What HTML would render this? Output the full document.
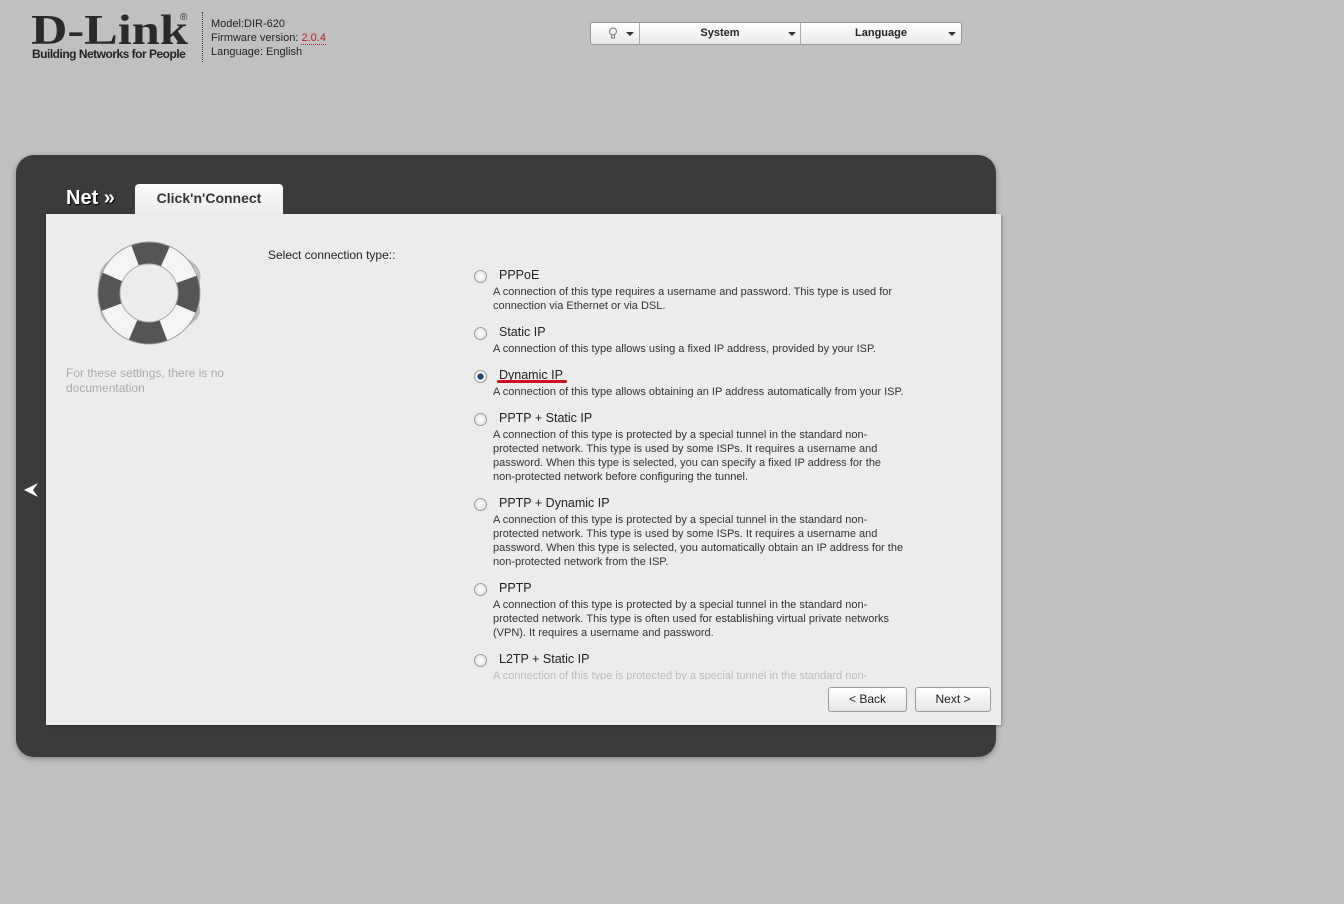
<!DOCTYPE html>
<html><head><style>
body{margin:0;width:1344px;height:904px;background:#c0c0c0;font-family:"Liberation Sans",sans-serif;position:relative;overflow:hidden}
.a{position:absolute}
.logo{left:31px;top:11px;font-family:"Liberation Serif",serif;font-weight:bold;font-size:42px;color:#2a2a2a;line-height:40px;transform:scaleX(1.2);transform-origin:left}
.tag{left:32px;top:47px;font-size:12px;font-weight:bold;color:#222;letter-spacing:-0.5px}
.info{left:211px;top:17px;font-size:11px;line-height:14px;color:#222}
.sep{left:202px;top:12px;height:50px;border-left:1px dotted #333}
.bar{left:590px;top:22px;width:370px;height:21px;background:linear-gradient(#fff,#e8e8e8);border:1px solid #999;border-radius:3px;font-size:11px;font-weight:bold;color:#222}
.bar div{position:absolute;top:0;height:21px;line-height:21px;text-align:center;border-right:1px solid #aaa}
.tri{position:absolute;top:9px;width:0;height:0;border-left:4px solid transparent;border-right:4px solid transparent;border-top:4px solid #333}
.panel{left:16px;top:155px;width:980px;height:602px;background:#3b3b3b;border-radius:18px;box-shadow:0 2px 6px rgba(0,0,0,.3)}
.content{left:46px;top:214px;width:955px;height:511px;background:#ececec;box-shadow:1px 1px 3px rgba(0,0,0,.3)}
.tab{left:135px;top:184px;width:148px;height:31px;background:linear-gradient(#fafafa,#ececec);border-radius:4px 4px 0 0;font-size:14px;font-weight:bold;color:#333;text-align:center;line-height:28px}
.net{left:66px;top:187px;font-size:20px;font-weight:bold;color:#fff;text-shadow:1px 1px 1px #000}
.r{position:absolute;left:474px;width:11px;height:11px;border-radius:50%;border:1px solid #999;background:radial-gradient(#fff,#ddd)}
.l{position:absolute;left:499px;top:0;font-size:12.5px;color:#222}
.d{position:absolute;left:493px;font-size:11px;line-height:14px;color:#333;white-space:nowrap}
.btn{top:687px;height:23px;border:1px solid #999;border-radius:3px;background:linear-gradient(#fff,#e6e6e6);font-size:12px;line-height:23px;text-align:center;color:#222}
</style></head><body>
<div class="a logo">D-Link</div>
<div class="a" style="left:180px;top:12px;font-size:10px;color:#333">®</div>
<div class="a tag">Building Networks for People</div>
<div class="a sep"></div>
<div class="a info">Model:DIR-620<br>Firmware version: <span style="color:#b22;border-bottom:1px dotted #b22">2.0.4</span><br>Language: English</div>
<div class="a bar">
<div style="left:0;width:48px"><svg width="10" height="13" style="position:absolute;left:17px;top:4px" viewBox="0 0 10 13"><circle cx="5" cy="4.5" r="3.5" fill="none" stroke="#777"/><path d="M3.5 8v3h3V8" fill="none" stroke="#777"/></svg><span class="tri" style="left:35px"></span></div>
<div style="left:49px;width:160px">System<span class="tri" style="left:148px"></span></div>
<div style="left:210px;width:160px;border:none">Language<span class="tri" style="left:147px"></span></div>
</div>
<div class="a panel"></div>
<div class="a content"></div>
<div class="a tab">Click'n'Connect</div>
<div class="a net">Net »</div>
<svg class="a" style="left:22px;top:481px" width="18" height="18" viewBox="0 0 18 18"><path d="M2 9 L16 2 L11 9 L16 16 Z" fill="#fff"/></svg>
<svg class="a" style="left:92px;top:240px" width="115" height="108" viewBox="0 0 115 108">
<path d="M20 20 Q5 30 10 45 M95 20 Q112 30 105 45 M20 85 Q5 75 12 62 M95 85 Q112 75 104 62" stroke="#bbb" stroke-width="3" fill="none"/>
<circle cx="57" cy="53" r="40" fill="none" stroke="#f4f4f4" stroke-width="22"/>
<circle cx="57" cy="53" r="40" fill="none" stroke="#555" stroke-width="22" stroke-dasharray="31 32" stroke-dashoffset="15"/>
<circle cx="57" cy="53" r="51" fill="none" stroke="#999" stroke-width="1"/>
<circle cx="57" cy="53" r="29" fill="none" stroke="#aaa" stroke-width="1"/>
</svg>
<div class="a" style="left:66px;top:366px;font-size:12px;line-height:15px;color:#aaa;width:180px">For these settings, there is no documentation</div>
<div class="a" style="left:268px;top:248px;font-size:12px;color:#222">Select connection type::</div>
<div style="position:absolute;left:0;top:0;width:1344px;height:680px;overflow:hidden">
<div class="r" style="top:270px"></div><div class="l" style="top:268px">PPPoE</div>
<div class="d" style="top:285px">A connection of this type requires a username and password. This type is used for<br>connection via Ethernet or via DSL.</div>
<div class="r" style="top:327px"></div><div class="l" style="top:325px">Static IP</div>
<div class="d" style="top:342px">A connection of this type allows using a fixed IP address, provided by your ISP.</div>
<div class="r" style="top:370px;background:radial-gradient(#246 0,#246 35%,#fff 45%,#ddd)"></div><div class="l" style="top:368px">Dynamic IP</div>
<div class="a" style="left:497px;top:380px;width:70px;height:3px;background:#d01020;border-radius:2px"></div>
<div class="d" style="top:385px">A connection of this type allows obtaining an IP address automatically from your ISP.</div>
<div class="r" style="top:413px"></div><div class="l" style="top:411px">PPTP + Static IP</div>
<div class="d" style="top:428px">A connection of this type is protected by a special tunnel in the standard non-<br>protected network. This type is used by some ISPs. It requires a username and<br>password. When this type is selected, you can specify a fixed IP address for the<br>non-protected network before configuring the tunnel.</div>
<div class="r" style="top:498px"></div><div class="l" style="top:496px">PPTP + Dynamic IP</div>
<div class="d" style="top:513px">A connection of this type is protected by a special tunnel in the standard non-<br>protected network. This type is used by some ISPs. It requires a username and<br>password. When this type is selected, you automatically obtain an IP address for the<br>non-protected network from the ISP.</div>
<div class="r" style="top:583px"></div><div class="l" style="top:581px">PPTP</div>
<div class="d" style="top:598px">A connection of this type is protected by a special tunnel in the standard non-<br>protected network. This type is often used for establishing virtual private networks<br>(VPN). It requires a username and password.</div>
<div class="r" style="top:654px"></div><div class="l" style="top:652px">L2TP + Static IP</div>
<div class="d" style="top:669px;color:#bbb">A connection of this type is protected by a special tunnel in the standard non-</div>
</div>
<div class="a btn" style="left:828px;width:77px">&lt; Back</div>
<div class="a btn" style="left:915px;width:74px">Next &gt;</div>
</body></html>
